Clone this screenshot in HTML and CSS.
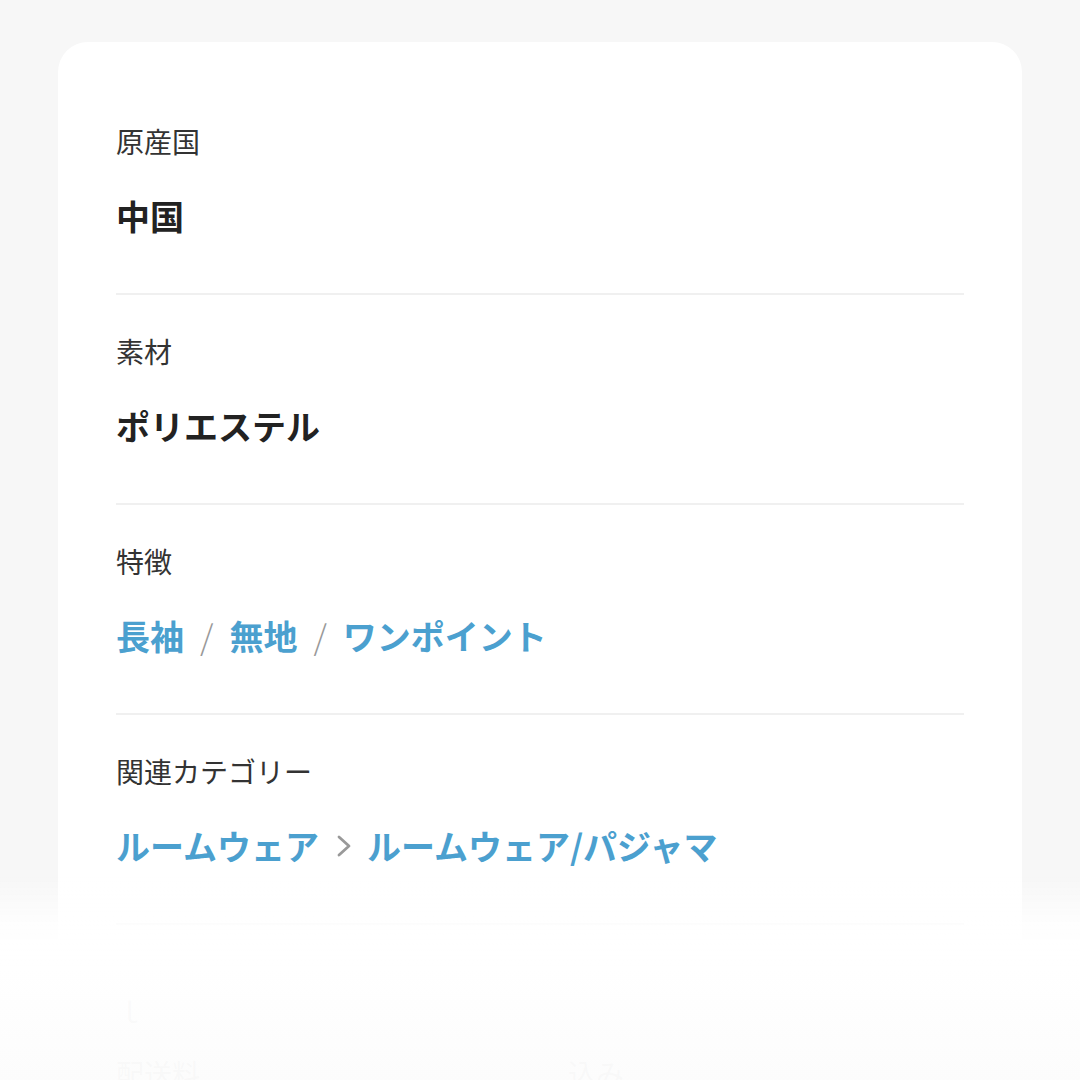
FILE: index.html
```html
<!DOCTYPE html>
<html lang="ja">
<head>
  <meta charset="UTF-8" />
  <meta name="viewport" content="width=device-width, initial-scale=1.0"/>
  <title>商品の情報</title>
  <link rel="stylesheet" href="styles.css">
</head>
<body>

<div class="card">
  <div class="row">
    <div class="label">原産国</div>
    <div class="value">中国</div>
  </div>

  <div class="row">
    <div class="label">素材</div>
    <div class="value">ポリエステル</div>
  </div>

  <div class="row">
    <div class="label">特徴</div>
    <div class="value">
      <a class="link" href="#">長袖</a><span class="sep">/</span><a class="link" href="#">無地</a><span class="sep">/</span><a class="link" href="#">ワンポイント</a>
    </div>
  </div>

  <div class="row">
    <div class="label">関連カテゴリー</div>
    <div class="value">
      <a class="link" href="#">ルームウェア</a>
      <svg class="chevron" viewBox="0 0 16 24" width="16" height="24">
        <path d="M3 3 L13 12 L3 21" fill="none" stroke="#999" stroke-width="2.8" stroke-linecap="round" stroke-linejoin="round"/>
      </svg>
      <a class="link" href="#">ルームウェア/パジャマ</a>
    </div>
  </div>

  <div class="row last">
    <div class="label">ｌ</div>
    <div class="value split">
      <span class="faint">配送料</span>
      <span class="faint">込み</span>
    </div>
  </div>

  <div class="fade"></div>
</div>

</body>
</html>
```

FILE: styles.css
```css
body {
  margin: 0;
  background: #f7f7f7;
  font-family: "Noto Sans CJK JP", "Noto Sans", sans-serif;
  color: #333;
}
.card {
  margin: 42px 58px 0;
  background: #fff;
  border-radius: 30px 30px 0 0;
  padding: 43px 58px 0;
  height: 1000px;
  overflow: hidden;
}
.row {
  padding: 36px 0 53px;
  border-bottom: 2px solid #f0f0f0;
}
.row.last {
  padding-top: 66px;
  border-bottom: none;
}
.label {
  font-size: 28px;
  line-height: 40px;
  color: #333;
}
.value {
  margin-top: 31px;
  font-size: 34px;
  line-height: 48px;
  font-weight: 700;
  color: #222;
  display: flex;
  align-items: center;
}
.link {
  color: #4ba0cf;
  text-decoration: none;
}
.sep {
  color: #999;
  font-weight: 300;
  margin: 0 16px;
}
.chevron {
  margin: 0 15px 0 17px;
}
.split {
  margin-top: 18px;
  justify-content: space-between;
  padding-right: 340px;
  font-weight: 400;
  font-size: 28px;
}
.faint {
  color: #333;
}
.fade {
  position: fixed;
  left: 0;
  right: 0;
  bottom: 0;
  height: 205px;
  background: linear-gradient(rgba(255,255,255,0), rgba(255,255,255,0.85) 25%, rgba(255,255,255,0.98) 45%, rgba(252,252,252,0.98));
}
```
